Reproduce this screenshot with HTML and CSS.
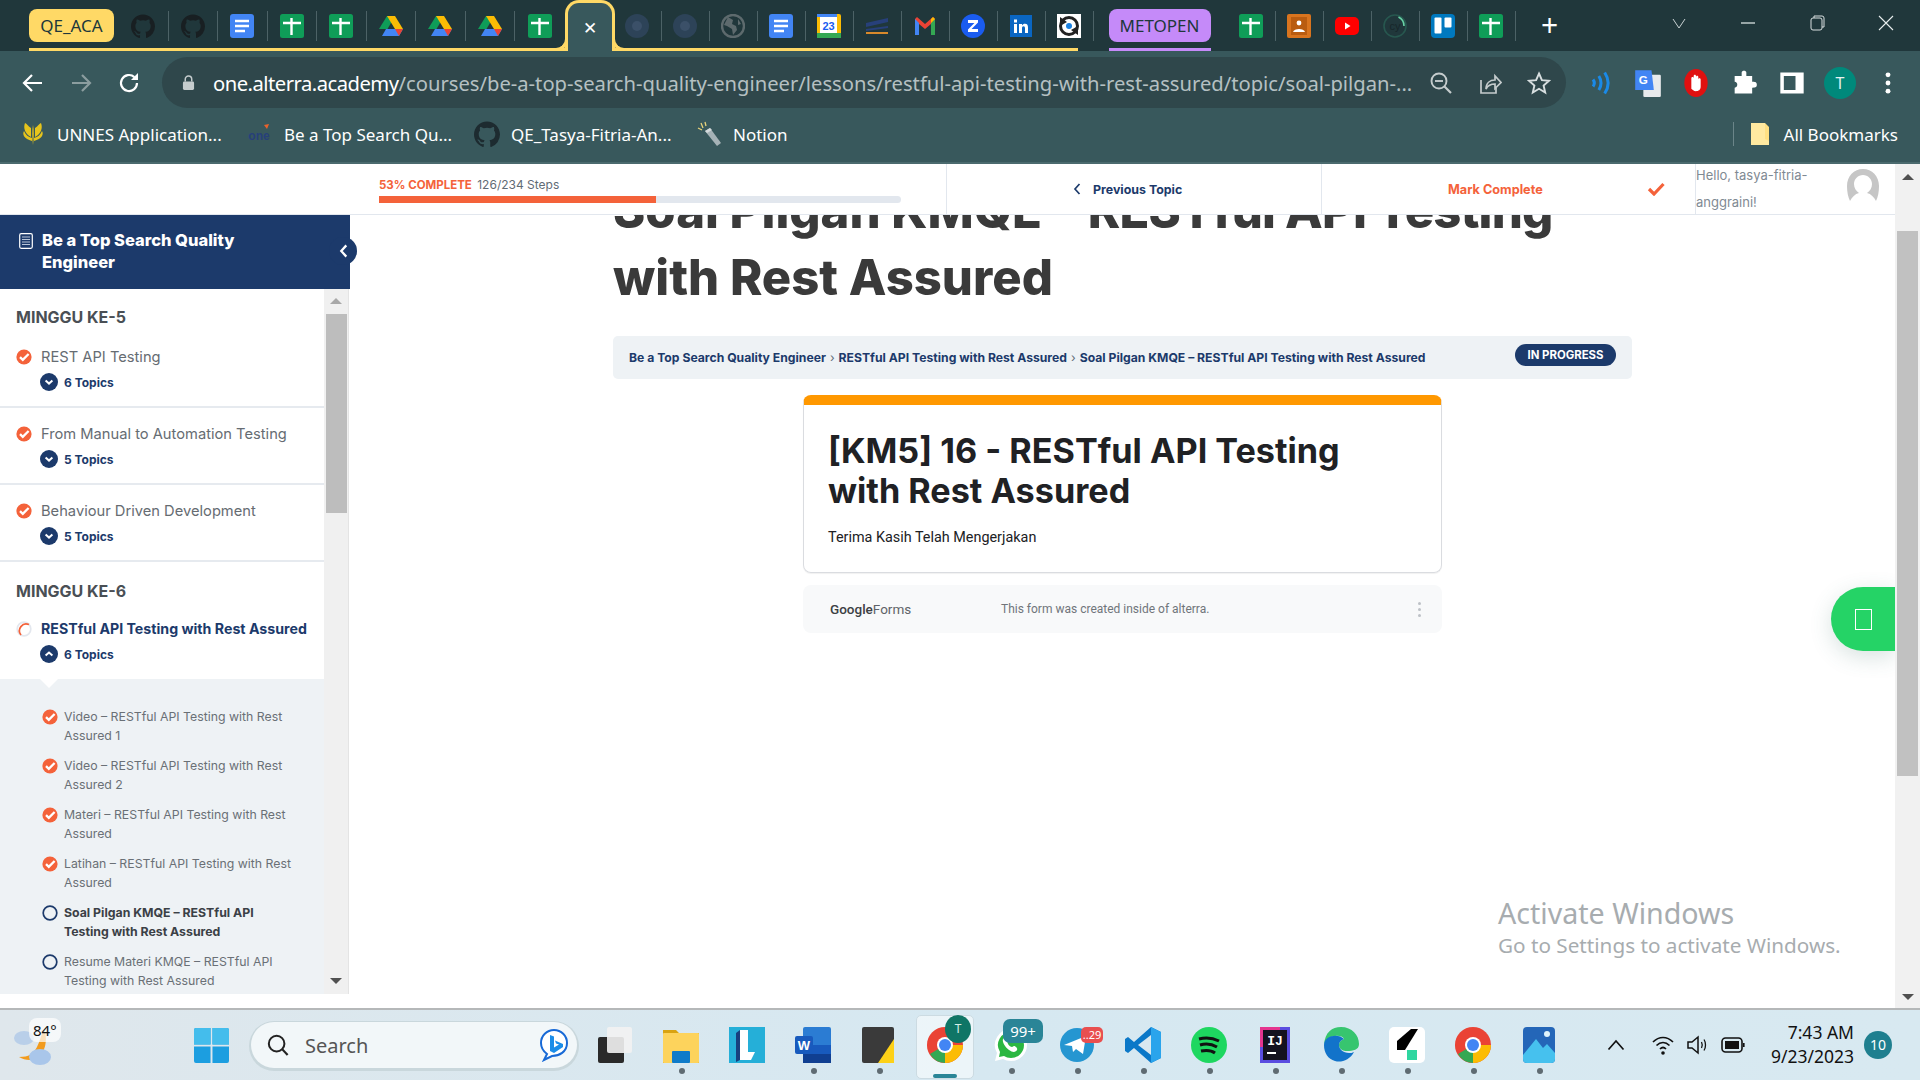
FILE: index.html
```html
<!DOCTYPE html>
<html lang="en">
<head>
  <meta charset="UTF-8">
  <title>Soal Pilgan KMQE</title>
  <link rel="stylesheet" href="styles.css">
</head>
<body>
  <svg class="sprites" width="0" height="0">
    <symbol id="i-sheets" viewBox="0 0 24 24"><rect width="24" height="24" rx="2.5" fill="#0f9d58"/><path d="M3 9h18M11.5 4v17" stroke="#fff" stroke-width="2.4"/></symbol>
    <symbol id="i-docs" viewBox="0 0 24 24"><rect width="24" height="24" rx="3" fill="#4285f4"/><path d="M5 7h14M5 12h14M5 17h10" stroke="#fff" stroke-width="2.4"/></symbol>
    <symbol id="i-drive" viewBox="0 0 24 24"><path d="M8 2h8L8.500 15H0z" fill="#0f9d58"/><path d="M16 2l8 13h-8L8 2z" fill="#fbbc04"/><path d="M3 22L7 15h17l-4 7z" fill="#4285f4"/><path d="M16 15h8l-4 7z" fill="#ea4335"/></symbol>
    <symbol id="i-github" viewBox="0 0 24 24"><path fill="currentColor" d="M12 .5C5.37.5 0 5.87 0 12.5c0 5.3 3.44 9.8 8.2 11.39.6.11.82-.26.82-.58v-2.03c-3.34.73-4.04-1.61-4.04-1.61-.55-1.39-1.33-1.76-1.33-1.76-1.09-.74.08-.73.08-.73 1.2.09 1.84 1.24 1.84 1.24 1.07 1.83 2.81 1.3 3.5 1 .11-.78.42-1.31.76-1.61-2.67-.3-5.47-1.33-5.47-5.93 0-1.31.47-2.38 1.24-3.22-.12-.3-.54-1.52.12-3.18 0 0 1.01-.32 3.3 1.23a11.5 11.5 0 0 1 6 0c2.29-1.55 3.3-1.23 3.3-1.23.66 1.66.24 2.88.12 3.18.77.84 1.24 1.91 1.24 3.22 0 4.61-2.81 5.63-5.48 5.92.43.37.81 1.1.81 2.22v3.29c0 .32.22.7.83.58A12 12 0 0 0 24 12.5C24 5.87 18.63.5 12 .5z"/></symbol>
    <symbol id="i-check" viewBox="0 0 16 16"><circle cx="8" cy="8" r="7.6" fill="#f4623a"/><path d="M4 8.200l2.800 2.700L12.600 5" fill="none" stroke="#fff" stroke-width="2.300"/></symbol>
    <symbol id="i-todo" viewBox="0 0 16 16"><circle cx="8" cy="8" r="6.8" fill="none" stroke="#1c3a6b" stroke-width="1.7"/></symbol>
    <symbol id="i-down" viewBox="0 0 18 18"><circle cx="9" cy="9" r="9" fill="#1c3a6b"/><path d="M5.600 7.600L9 10.600l3.400-3" fill="none" stroke="#fff" stroke-width="2"/></symbol>
    <symbol id="i-up" viewBox="0 0 18 18"><circle cx="9" cy="9" r="9" fill="#1c3a6b"/><path d="M5.600 10.600L9 7.600l3.400 3" fill="none" stroke="#fff" stroke-width="2"/></symbol>
    <symbol id="i-chrome" viewBox="0 0 36 36"><circle cx="18" cy="18" r="18" fill="#ea4335"/><path d="M18 18L3 27A18 18 0 0 1 3 9z" fill="#ea4335"/><path d="M18 18l-15 9a18 18 0 0 0 15 9l9-18z" fill="#34a853"/><path d="M18 18h18a18 18 0 0 1-18 18z" fill="#fbbc04"/><circle cx="18" cy="18" r="8" fill="#fff"/><circle cx="18" cy="18" r="6" fill="#4285f4"/></symbol>
  </svg>

  <div class="tabstrip">
    <div class="tab-group group-yellow">
      <div class="tab-pill pill-yellow">QE_ACA</div>
      <div class="tabs-wide">
        <div class="tab dim-gh"><svg class="tab-icon"><use href="#i-github"/></svg></div>
        <div class="tab dim-gh"><svg class="tab-icon"><use href="#i-github"/></svg></div>
        <div class="tab"><svg class="tab-icon"><use href="#i-docs"/></svg></div>
        <div class="tab"><svg class="tab-icon"><use href="#i-sheets"/></svg></div>
        <div class="tab"><svg class="tab-icon"><use href="#i-sheets"/></svg></div>
        <div class="tab"><svg class="tab-icon"><use href="#i-drive"/></svg></div>
        <div class="tab"><svg class="tab-icon"><use href="#i-drive"/></svg></div>
        <div class="tab"><svg class="tab-icon"><use href="#i-drive"/></svg></div>
        <div class="tab no-sep"><svg class="tab-icon"><use href="#i-sheets"/></svg></div>
      </div>
      <div class="tab-active">✕</div>
      <div class="tabs-tight tabs-after-active">
        <div class="tab"><svg class="tab-icon" viewBox="0 0 24 24"><circle cx="12" cy="12" r="12" fill="#2d4358"/><circle cx="12" cy="12" r="5" fill="#3b5068"/></svg></div>
        <div class="tab"><svg class="tab-icon" viewBox="0 0 24 24"><circle cx="12" cy="12" r="12" fill="#2d4358"/><circle cx="12" cy="12" r="5" fill="#3b5068"/></svg></div>
        <div class="tab"><svg class="tab-icon" viewBox="0 0 24 24"><circle cx="12" cy="12" r="11" fill="none" stroke="#5d6a6d" stroke-width="2.4"/><path d="M7 3l5 3-1 4 4 2 1 4-4 5-1-6-5-3-3-1zM17 5l3 5-3 1z" fill="#5d6a6d"/></svg></div>
        <div class="tab"><svg class="tab-icon"><use href="#i-docs"/></svg></div>
        <div class="tab"><svg class="tab-icon" viewBox="0 0 24 24"><rect width="24" height="24" rx="2" fill="#fbbc04"/><rect x="0" y="19" width="24" height="5" fill="#34a853"/><rect x="3" y="3" width="17" height="16" fill="#fff"/><rect y="0" width="20" height="3" fill="#4285f4"/><text x="11.5" y="16" class="cal-day">23</text></svg></div>
        <div class="tab"><svg class="tab-icon" viewBox="0 0 24 24"><path d="M1 9l22-5v4L1 13zM1 15l22-3v2L1 17z" fill="#27407a"/><rect x="1" y="18" width="22" height="2" fill="#d98a2b"/></svg></div>
        <div class="tab"><svg class="tab-icon" viewBox="0 0 24 24"><path d="M2 5v16h4V10l6 5 6-5v11h4V5l-2-2-8 7-8-7z" fill="#ea4335"/><path d="M2 5v16h4V9z" fill="#4285f4"/><path d="M18 9v12h4V5z" fill="#34a853"/><path d="M18 9l4-4-2-2-2 2z" fill="#fbbc04"/></svg></div>
        <div class="tab"><svg class="tab-icon" viewBox="0 0 24 24"><circle cx="12" cy="12" r="12" fill="#1a5cf0"/><path d="M7 6h10v2.400L10.600 15H17v3H7v-2.400L13.400 9H7z" fill="#fff"/></svg></div>
        <div class="tab"><svg class="tab-icon" viewBox="0 0 24 24"><rect x="1" y="1" width="22" height="22" fill="#0a66c2"/><path d="M5 10h3v9H5zM5 5.500h3v3H5zM10 10h3v1.400c.7-1 1.700-1.600 3-1.600 2.400 0 3 1.600 3 4V19h-3v-4.600c0-1.400-.4-2.200-1.500-2.200S13 13 13 14.400V19h-3z" fill="#fff"/></svg></div>
        <div class="tab"><svg class="tab-icon" viewBox="0 0 24 24"><rect width="24" height="24" fill="#fff"/><circle cx="12" cy="12" r="8.500" fill="none" stroke="#222" stroke-width="3"/><path d="M3 3l7 5-7 4zM21 21l-7-5 7-4z" fill="#222"/><circle cx="12" cy="12" r="3" fill="#1a80e0"/></svg></div>
      </div>
    </div>
    <div class="tab-group group-purple">
      <div class="tab-pill pill-purple">METOPEN</div>
    </div>
    <div class="tabs-tight tabs-last">
      <div class="tab"><svg class="tab-icon"><use href="#i-sheets"/></svg></div>
      <div class="tab"><svg class="tab-icon" viewBox="0 0 24 24"><rect width="24" height="24" rx="2" fill="#d8741e"/><rect x="4" y="3" width="16" height="18" fill="#b95c10"/><circle cx="12" cy="9" r="2.400" fill="#fff"/><path d="M6 18c1-4 11-4 12 0z" fill="#fff"/></svg></div>
      <div class="tab"><svg class="tab-icon" viewBox="0 0 24 24"><rect y="3" width="24" height="18" rx="5" fill="#f00"/><path d="M10 8.500l5.500 3.500-5.500 3.500z" fill="#fff"/></svg></div>
      <div class="tab"><svg class="tab-icon" viewBox="0 0 24 24"><circle cx="12" cy="12" r="11" fill="none" stroke="#27574f" stroke-width="1.600"/><path d="M15.500 3A10 10 0 0 1 21 12" fill="none" stroke="#69d3a7" stroke-width="1.600"/><text x="12" y="16" class="cy-text">cy</text></svg></div>
      <div class="tab"><svg class="tab-icon" viewBox="0 0 24 24"><rect width="24" height="24" rx="4" fill="#0079bf"/><rect x="3.500" y="3.500" width="7" height="16" rx="1" fill="#fff"/><rect x="13.500" y="3.500" width="7" height="10" rx="1" fill="#fff"/></svg></div>
      <div class="tab"><svg class="tab-icon"><use href="#i-sheets"/></svg></div>
    </div>
    <div class="tab-new">+</div>
    <div class="win-controls">
      <svg class="win-btn" viewBox="0 0 20 20"><path d="M4 6l6 9 6-9" fill="none" stroke="#c9d2d3" stroke-width="1"/></svg>
      <svg class="win-btn" viewBox="0 0 20 20"><path d="M3 10h14" stroke="#e8eeee" stroke-width="1.200"/></svg>
      <svg class="win-btn" viewBox="0 0 20 20"><rect x="4" y="5" width="11" height="12" rx="2" fill="none" stroke="#d8dfe0"/><path d="M7 5V3h8a2 2 0 0 1 2 2v9h-2" fill="none" stroke="#d8dfe0"/></svg>
      <svg class="win-btn" viewBox="0 0 20 20"><path d="M3 3l14 14M17 3L3 17" stroke="#e8eeee" stroke-width="1.100"/></svg>
    </div>
  </div>

  <div class="toolbar">
    <div class="nav-btns">
      <svg class="tool-icon" viewBox="0 0 24 24"><path d="M21 12H4M11 4l-8 8 8 8" fill="none" stroke="#fff" stroke-width="2.200"/></svg>
      <svg class="tool-icon" viewBox="0 0 24 24"><path d="M3 12h17M13 4l8 8-8 8" fill="none" stroke="#8b9d9f" stroke-width="2.200"/></svg>
      <svg class="tool-icon" viewBox="0 0 24 24"><path d="M20 12a8 8 0 1 1-2.600-5.900" fill="none" stroke="#fff" stroke-width="2.200"/><path d="M21 2v7h-7z" fill="#fff"/></svg>
    </div>
    <div class="omnibox">
      <svg class="lock" viewBox="0 0 14 18"><path d="M3.500 8V5.500a3.500 3.500 0 0 1 7 0V8" fill="none" stroke="#c5cccd" stroke-width="1.600"/><rect x="1" y="8" width="12" height="9" rx="1.500" fill="#c5cccd"/></svg>
      <div class="url"><span class="url-host">one.alterra.academy</span>/courses/be-a-top-search-quality-engineer/lessons/restful-api-testing-with-rest-assured/topic/soal-pilgan-...</div>
      <div class="omni-actions">
        <svg class="tool-icon" viewBox="0 0 24 24"><circle cx="10" cy="10" r="7.500" fill="none" stroke="#c5cccd" stroke-width="1.900"/><path d="M15.500 15.500L22 22" stroke="#c5cccd" stroke-width="2.200"/><path d="M6 10h8" stroke="#c5cccd" stroke-width="1.900"/></svg>
        <svg class="tool-icon" viewBox="0 0 24 24"><path d="M3 9v13h15v-5" fill="none" stroke="#c5cccd" stroke-width="1.700"/><path d="M8 18c0-6 4-9 9-9V5l6 6.500-6 6V13c-4 0-7 1-9 5z" fill="none" stroke="#c5cccd" stroke-width="1.700"/></svg>
        <svg class="tool-icon" viewBox="0 0 24 24"><path d="M12 2.500l2.900 6.600 7.100.7-5.400 4.700 1.600 7-6.200-3.700-6.200 3.700 1.600-7L2 9.800l7.100-.7z" fill="none" stroke="#d8dfe0" stroke-width="1.900"/></svg>
      </div>
    </div>
    <div class="ext-btns">
      <svg class="ext-icon" viewBox="0 0 24 24"><path d="M6 9c1.500 2 1.500 4 0 6M11 6c2.500 4 2.500 8 0 12M16 3c4 6 4 12 0 18" fill="none" stroke="#1a8ae8" stroke-width="2.600"/></svg>
      <svg class="ext-icon" viewBox="0 0 24 24"><rect x="8" y="5" width="15" height="19" rx="1" fill="#e8eaec"/><path d="M1 1h14l2 17H1z" fill="#4285f4"/><text x="8" y="13" class="g-text">G</text></svg>
      <svg class="ext-icon" viewBox="0 0 24 24"><ellipse cx="12" cy="12" rx="10" ry="12" fill="#e01010"/><path d="M8 17V8c0-1.500 2-1.500 2 0V6c0-1.500 2-1.500 2 0v1c0-1.500 2-1.500 2 0v2c0-1.500 2-1.500 2 0v6c0 3-2 4-4 4s-3-1-4-2z" fill="#fff"/></svg>
      <svg class="ext-icon" viewBox="0 0 24 24"><path d="M10 3c0-2 4-2 4 0v3h5v5c2 0 4 0 4 2.500S21 16 19 16v5H4v-5c3 0 3-5 0-5V6h6z" fill="#fff"/></svg>
      <svg class="ext-icon" viewBox="0 0 24 24"><rect x="2" y="3" width="20" height="18" fill="#fff"/><rect x="5" y="6" width="10" height="12" fill="#38585c"/></svg>
      <div class="profile">T</div>
      <svg class="ext-icon" viewBox="0 0 24 24"><circle cx="12" cy="5" r="2.100" fill="#fff"/><circle cx="12" cy="12" r="2.100" fill="#fff"/><circle cx="12" cy="19" r="2.100" fill="#fff"/></svg>
    </div>
  </div>

  <div class="bookmarks">
    <div class="bm bm-unnes">
      <svg class="bm-icon" viewBox="0 0 26 26"><path d="M13 4c-1 5-1 12 0 20 1-8 1-15 0-20zM11 7C8 5 6 2 5 2c-2 5 0 11 6 14zM15 7c3-2 5-5 6-5 2 5 0 11-6 14zM4 10c-2 3 0 8 8 10v-3c-4-1-6-3-8-7zM22 10c2 3 0 8-8 10v-3c4-1 6-3 8-7z" fill="#e6c41c"/></svg>
      UNNES Application...
    </div>
    <div class="bm bm-one">
      <svg class="bm-icon" viewBox="0 0 26 26"><path d="M17 4l5-1-2 5z" fill="#e8622c"/><text x="12" y="19" class="one-text">one</text></svg>
      Be a Top Search Qu...
    </div>
    <div class="bm bm-gh">
      <svg class="bm-icon gh-dark"><use href="#i-github"/></svg>
      QE_Tasya-Fitria-An...
    </div>
    <div class="bm bm-notion">
      <svg class="bm-icon" viewBox="0 0 26 26"><path d="M8 10l5-3 11 15-4 3z" fill="#a5b2b6"/><path d="M8 10l5-3 2 2-5 3z" fill="#d4dadc"/><path d="M4 2l2 5M8 1l1 4M1 7l4 2" stroke="#e6d27a" stroke-width="1.300"/></svg>
      Notion
    </div>
    <div class="bm-all">
      <svg class="bm-folder" viewBox="0 0 18 22"><path d="M0 0h14l4 4v18H0z" fill="#ffe082"/><path d="M0 0h14v16l4 2v4H0z" fill="#ffe9a0"/></svg>
      All Bookmarks
    </div>
  </div>

  <div class="page">
    <div class="page-body">
      <div class="topbar">
        <div class="progress-cell">
          <div class="progress-label"><span class="progress-pct">53% COMPLETE</span> 126/234 Steps</div>
          <div class="progress-track"><div class="progress-fill" style="width: 53%"></div></div>
        </div>
        <div class="prev-cell">
          <svg class="prev-chev" viewBox="0 0 8 12"><path d="M6.500 1L2 6l4.500 5" fill="none" stroke="#1c3a6b" stroke-width="1.700"/></svg>
          Previous Topic
        </div>
        <div class="complete-cell">
          <span class="complete-text">Mark Complete</span>
          <svg class="complete-check" viewBox="0 0 18 14"><path d="M2 7l5 5L16.500 2" fill="none" stroke="#f4623a" stroke-width="3.200"/></svg>
        </div>
        <div class="user-cell">
          <div class="hello">Hello, tasya-fitria-<br>anggraini!</div>
          <svg class="avatar" viewBox="0 0 32 34"><path d="M16 0c9 0 16 7 16 17 0 6-1 11-3 15-2-4-5-7-9-8 3-2 5-5 5-9 0-5-4-9-9-9s-9 4-9 9c0 4 2 7 5 9-4 1-7 4-9 8C1 28 0 23 0 17 0 7 7 0 16 0z" fill="#c6c6c6"/></svg>
        </div>
      </div>

      <div class="content-row">
        <aside class="sidebar">
          <div class="side-head">
            <svg class="side-book" viewBox="0 0 14 16"><rect x=".7" y=".7" width="12.600" height="14.600" rx="1.500" fill="#1c3a6b" stroke="#fff" stroke-width="1.200"/><path d="M3 4h8M3 6.500h8M3 9h8M3 11.500h8" stroke="#b7c4d8" stroke-width="1.200"/></svg>
            <div class="side-title">Be a Top Search Quality Engineer</div>
            <div class="side-toggle"><svg class="side-chev" viewBox="0 0 8 12"><path d="M6.500 1L2 6l4.500 5" fill="none" stroke="#fff" stroke-width="2"/></svg></div>
          </div>
          <div class="side-scroll">
            <div class="side-list">
              <h3 class="week week-first">MINGGU KE-5</h3>
              <div class="lesson">
                <div class="lesson-title"><svg class="status"><use href="#i-check"/></svg>REST API Testing</div>
                <div class="topics"><svg class="topic-toggle"><use href="#i-down"/></svg>6 Topics</div>
              </div>
              <div class="lesson">
                <div class="lesson-title"><svg class="status"><use href="#i-check"/></svg>From Manual to Automation Testing</div>
                <div class="topics"><svg class="topic-toggle"><use href="#i-down"/></svg>5 Topics</div>
              </div>
              <div class="lesson">
                <div class="lesson-title"><svg class="status"><use href="#i-check"/></svg>Behaviour Driven Development</div>
                <div class="topics"><svg class="topic-toggle"><use href="#i-down"/></svg>5 Topics</div>
              </div>
              <h3 class="week">MINGGU KE-6</h3>
              <div class="lesson lesson-open">
                <div class="lesson-title lesson-current">
                  <svg class="status" viewBox="0 0 16 16"><circle cx="8" cy="8" r="6.800" fill="none" stroke="#e3e7ee" stroke-width="1.700"/><path d="M13 3.500A6.800 6.800 0 0 0 5 14" fill="none" stroke="#f4623a" stroke-width="1.700"/></svg>
                  RESTful API Testing with Rest Assured
                </div>
                <div class="topics"><svg class="topic-toggle"><use href="#i-up"/></svg>6 Topics</div>
              </div>
              <div class="subitems">
                <div class="sub"><svg class="status"><use href="#i-check"/></svg><span>Video – RESTful API Testing with Rest<br>Assured 1</span></div>
                <div class="sub"><svg class="status"><use href="#i-check"/></svg><span>Video – RESTful API Testing with Rest<br>Assured 2</span></div>
                <div class="sub"><svg class="status"><use href="#i-check"/></svg><span>Materi – RESTful API Testing with Rest<br>Assured</span></div>
                <div class="sub"><svg class="status"><use href="#i-check"/></svg><span>Latihan – RESTful API Testing with Rest<br>Assured</span></div>
                <div class="sub sub-current"><svg class="status"><use href="#i-todo"/></svg><span>Soal Pilgan KMQE – RESTful API<br>Testing with Rest Assured</span></div>
                <div class="sub"><svg class="status"><use href="#i-todo"/></svg><span>Resume Materi KMQE – RESTful API<br>Testing with Rest Assured</span></div>
              </div>
            </div>
            <div class="side-bar">
              <div class="arrow-up"></div>
              <div class="side-thumb"></div>
              <div class="arrow-down"></div>
            </div>
          </div>
        </aside>

        <main class="main">
          <div class="column">
            <h1 class="title">Soal Pilgan KMQE – <span class="title-tail">RESTful API Testing</span><br>with Rest Assured</h1>
            <div class="crumbs">
              <div class="crumb-path">
                <span>Be a Top Search Quality Engineer</span><span class="crumb-sep">›</span><span>RESTful API Testing with Rest Assured</span><span class="crumb-sep">›</span><span>Soal Pilgan KMQE – RESTful API Testing with Rest Assured</span>
              </div>
              <div class="badge">IN PROGRESS</div>
            </div>
            <div class="form-wrap">
              <div class="form-card">
                <h2 class="form-title">[KM5] 16 - RESTful API Testing<br>with Rest Assured</h2>
                <p class="form-note">Terima Kasih Telah Mengerjakan</p>
              </div>
              <div class="form-foot">
                <div class="form-brand"><span class="brand-g">Google</span>Forms</div>
                <div class="form-created">This form was created inside of alterra.</div>
                <div class="form-dots"><i></i><i></i><i></i></div>
              </div>
            </div>
          </div>
          <div class="fab"><div class="fab-box"></div></div>
          <div class="activate">
            <div class="activate-big">Activate Windows</div>
            <div class="activate-small">Go to Settings to activate Windows.</div>
          </div>
        </main>
      </div>
    </div>
    <div class="page-bar">
      <div class="arrow-up"></div>
      <div class="page-thumb"></div>
      <div class="arrow-down"></div>
    </div>
  </div>

  <div class="taskbar">
    <div class="weather">
      <svg class="weather-icon" viewBox="0 0 38 40"><path d="M30 2c4 10 2 25-9 30-5 2-11 1-16-2 10 0 14-3 18-10 3-6 4-12 7-18z" fill="#f29b1d"/><ellipse cx="10" cy="11" rx="10" ry="7" fill="#b9cfe9"/><ellipse cx="26" cy="30" rx="11" ry="8" fill="#a9c6ea"/></svg>
      <span class="temp">84°</span>
    </div>
    <svg class="start" viewBox="0 0 36 36"><path d="M0 2a2 2 0 0 1 2-2h15v17H0zM19 0h15a2 2 0 0 1 2 2v15H19zM0 19h17v17H2a2 2 0 0 1-2-2zM19 19h17v15a2 2 0 0 1-2 2H19z" fill="#1c9ee0"/><path d="M0 2a2 2 0 0 1 2-2h15v17H0zM19 0h15a2 2 0 0 1 2 2v15H19z" fill="#44bdec"/></svg>
    <div class="search">
      <svg class="search-icon" viewBox="0 0 24 24"><circle cx="10.500" cy="10.500" r="8.500" fill="none" stroke="#222" stroke-width="2.200"/><path d="M16.500 16.500L22.500 23" stroke="#222" stroke-width="2.400"/></svg>
      <span class="search-text">Search</span>
      <svg class="bing" viewBox="0 0 30 34"><path d="M15 2a13 13 0 0 1 13 13c0 9-8 13-15 13l-8 4 3-6C4 23 2 19 2 15A13 13 0 0 1 15 2z" fill="#fff" stroke="#1769d6" stroke-width="2"/><path d="M11 7l4 1.500v11l5-3-3-1-1-3 8 3.500v3L15 25l-4-2z" fill="#1b8de8"/></svg>
    </div>
    <div class="apps">
      <div class="app"><svg class="app-icon" viewBox="0 0 34 36"><rect x="0" y="10" width="26" height="26" rx="2" fill="#2a2a2a"/><rect x="9" y="0" width="25" height="26" rx="2" fill="#f2f2f2" opacity=".9"/></svg></div>
      <div class="app"><svg class="app-icon" viewBox="0 0 36 36"><path d="M0 3h13l3 3h20v30H0z" fill="#d9a311"/><rect y="6" width="36" height="30" rx="1" fill="#fdd35c"/><rect x="9" y="24" width="18" height="12" rx="1" fill="#0f7bc9"/></svg><i class="dot"></i></div>
      <div class="app"><svg class="app-icon" viewBox="0 0 36 36"><rect width="36" height="36" fill="#25afd8"/><path d="M11 3h8v22h7l-4 8H11z" fill="#fff"/><path d="M11 33l-4 2V6l4-3z" fill="#18407e"/></svg></div>
      <div class="app"><svg class="app-icon" viewBox="0 0 36 36"><rect x="8" y="0" width="28" height="36" rx="2" fill="#2b7cd3"/><rect x="8" y="18" width="28" height="9" fill="#185abd"/><rect x="8" y="27" width="28" height="9" fill="#103f91"/><rect y="9" width="18" height="18" rx="2" fill="#185abd"/><text x="9" y="23" class="w-text">W</text></svg><i class="dot"></i></div>
      <div class="app"><svg class="app-icon" viewBox="0 0 34 36"><rect width="32" height="36" rx="2" fill="#3a3a3a"/><path d="M32 12L16 36h16z" fill="#fdd118"/></svg><i class="dot"></i></div>
      <div class="app app-active">
        <svg class="app-icon"><use href="#i-chrome"/></svg>
        <span class="app-t">T</span>
        <i class="dash"></i>
      </div>
      <div class="app">
        <svg class="app-icon" viewBox="0 0 36 36"><path d="M18 2a16 16 0 0 1 0 32c-3 0-6-1-8-2l-8 2 2-8a16 16 0 0 1 14-24z" fill="#fff"/><path d="M18 5a13 13 0 0 1 0 26c-3 0-5-1-7-2l-5 1 1-5A13 13 0 0 1 18 5z" fill="#2bb741"/><path d="M12 10c2-1 3 3 3 4s-1 1 0 3 3 3 4 3 1-1 2-1 4 2 3 4-4 3-8 0-7-8-6-11z" fill="#fff"/></svg>
        <span class="app-badge badge-wa">99+</span><i class="dot"></i>
      </div>
      <div class="app">
        <svg class="app-icon" viewBox="0 0 36 36"><circle cx="18" cy="18" r="17" fill="#2596d1"/><path d="M5 18l22-9-3 18-7-5-3 3-1-6z" fill="#fff"/></svg>
        <span class="app-badge badge-tg">..29</span><i class="dot"></i>
      </div>
      <div class="app"><svg class="app-icon" viewBox="0 0 36 36"><path d="M26 0l10 5v26l-10 5L9 21 3 26 0 24V12l3-2 6 5z" fill="#0b78c8"/><path d="M26 8L13 18l13 10z" fill="#d9e8f0"/><path d="M26 0l10 5v26l-10 5z" fill="#2aa4ec"/></svg><i class="dot"></i></div>
      <div class="app"><svg class="app-icon" viewBox="0 0 36 36"><circle cx="18" cy="18" r="18" fill="#1ed760"/><path d="M8 12c7-2 14-1 20 2M9 18c6-2 12-1 17 2M10 24c5-1 10-1 14 2" fill="none" stroke="#111" stroke-width="3"/></svg><i class="dot"></i></div>
      <div class="app"><svg class="app-icon" viewBox="0 0 30 36"><rect width="30" height="36" fill="#5a4de0"/><rect y="0" width="20" height="20" fill="#e5358f"/><rect x="3" y="3" width="24" height="30" fill="#14121f"/><text x="15" y="18" class="ij-text">IJ</text><rect x="7" y="25" width="9" height="2" fill="#fff"/></svg><i class="dot"></i></div>
      <div class="app"><svg class="app-icon" viewBox="0 0 36 36"><path d="M18 0c11 0 18 8 18 17 0 6-6 7-12 7-4 0-8-2-8-6 0-3 2-5 5-6-2-5-17-5-20 6C2 5 9 0 18 0z" fill="#37c56f"/><path d="M1 18C1 8 16 6 21 12c-3 1-5 3-5 6 0 4 4 8 10 8 2 0 3 0 5-1-4 8-13 11-19 9C5 32 1 26 1 18z" fill="#1273ca"/></svg><i class="dot"></i></div>
      <div class="app"><svg class="app-icon" viewBox="0 0 36 36"><rect width="36" height="36" rx="5" fill="#fff"/><path d="M22 2h7L16 23H8V14z" fill="#000"/><rect x="18" y="23" width="10" height="10" fill="#2fd6a0"/></svg><i class="dot"></i></div>
      <div class="app"><svg class="app-icon"><use href="#i-chrome"/></svg><i class="dot"></i></div>
      <div class="app"><svg class="app-icon" viewBox="0 0 32 36"><rect width="32" height="36" rx="4" fill="#2466b8"/><path d="M0 28l13-16 7 9 4-4 8 9v6a4 4 0 0 1-4 4H4a4 4 0 0 1-4-4z" fill="#46c1ee"/><circle cx="24" cy="7" r="3" fill="#dff3fb"/></svg><i class="dot"></i></div>
    </div>
    <div class="tray">
      <svg class="tray-up" viewBox="0 0 18 12"><path d="M1.500 10.500L9 2l7.500 8.500" fill="none" stroke="#111" stroke-width="1.700"/></svg>
      <svg class="tray-icon" viewBox="0 0 24 24"><path d="M2 9c6-6 14-6 20 0M5.500 12.500c4-4 9-4 13 0M9 16c2-2 4-2 6 0" fill="none" stroke="#111" stroke-width="1.700"/><circle cx="12" cy="20" r="1.800" fill="#111"/></svg>
      <svg class="tray-icon" viewBox="0 0 24 24"><path d="M2 9h4l6-5v16l-6-5H2z" fill="none" stroke="#111" stroke-width="1.500"/><path d="M15.500 9c1 2 1 4 0 6M18 6.500c2 3 2 8 0 11" fill="none" stroke="#111" stroke-width="1.300"/></svg>
      <svg class="tray-icon" viewBox="0 0 24 24"><rect x="1" y="5" width="20" height="14" rx="3.500" fill="none" stroke="#111" stroke-width="1.600"/><rect x="4" y="8" width="14" height="8" fill="#111"/><rect x="22" y="10" width="1.600" height="4" fill="#111"/></svg>
      <div class="clock"><div>7:43 AM</div><div>9/23/2023</div></div>
      <div class="notif">10</div>
    </div>
  </div>
</body>
</html>
```

FILE: styles.css
```css
* {
  box-sizing: border-box;
}

html, body {
  height: 100%;
}

body {
  margin: 0;
  display: flex;
  flex-direction: column;
  height: 1080px;
  overflow: hidden;
  font-family: 'Inter', sans-serif;
  background: #fff;
}

.sprites {
  position: absolute;
}

/* ---- tab strip ---- */
.tabstrip {
  display: flex;
  height: 51px;
  flex: none;
  padding-left: 29px;
  background: #20373b;
  font-family: 'Noto Sans', sans-serif;
}

.tab-group {
  display: flex;
  height: 51px;
}

.group-yellow {
  border-bottom: 3px solid #ffd966;
}

.group-purple {
  margin-left: 31px;
  border-bottom: 3px solid #c58af9;
}

.tab-pill {
  height: 33px;
  margin-top: 9px;
  border-radius: 8px;
  display: flex;
  align-items: center;
  justify-content: center;
  font-size: 17px;
  color: #20373b;
}

.pill-yellow {
  width: 85px;
  margin-right: 5px;
  background: #ffd966;
}

.pill-purple {
  width: 102px;
  background: #c58af9;
}

.tabs-wide, .tabs-tight {
  display: flex;
}

.tab {
  height: 30px;
  margin-top: 11px;
  display: flex;
  align-items: center;
  justify-content: center;
  border-right: 1px solid #4c6266;
  width: 49.5px;
  flex: none;
}

.tabs-tight .tab {
  width: 48px;
}

.no-sep {
  border-right: none;
}

.dim-gh {
  color: #181f22;
}

.tabs-after-active {
  margin-left: -1px;
  margin-right: -16px;
}

.tabs-last {
  margin-left: 17px;
}

.tab-icon {
  width: 24px;
  height: 24px;
  display: block;
}

.tab-active {
  width: 50px;
  height: 51px;
  flex: none;
  border: 3px solid #ffd966;
  border-bottom: none;
  border-radius: 14px 14px 0 0;
  background: #38585c;
  display: flex;
  align-items: center;
  justify-content: center;
  color: #fff;
  font-size: 17px;
  position: relative;
  z-index: 1;
}

.tab-active::before,
.tab-active::after {
  content: "";
  position: absolute;
  bottom: 0;
  width: 12px;
  height: 12px;
  background: #20373b;
  border-bottom: 3px solid #ffd966;
}

.tab-active::before {
  left: -15px;
  border-right: 3px solid #ffd966;
  border-bottom-right-radius: 12px;
}

.tab-active::after {
  right: -15px;
  border-left: 3px solid #ffd966;
  border-bottom-left-radius: 12px;
}

.cal-day {
  font: bold 11px 'Liberation Sans', sans-serif;
  fill: #1a5cf0;
  text-anchor: middle;
}

.cy-text {
  font: 11px 'Liberation Sans', sans-serif;
  fill: #17262a;
  text-anchor: middle;
}

.tab-new {
  width: 60px;
  margin-left: 4px;
  text-align: center;
  color: #fff;
  font-size: 30px;
  line-height: 50px;
}

.win-controls {
  margin-left: auto;
  display: flex;
}

.win-btn {
  width: 20px;
  height: 20px;
  margin: 13px 24px 0 25px;
  flex: none;
}

/* ---- toolbar ---- */
.toolbar {
  display: flex;
  align-items: center;
  height: 69px;
  flex: none;
  padding-bottom: 12px;
  padding-top: 6px;
  background: #38585c;
  font-family: 'Noto Sans', sans-serif;
}

.nav-btns {
  display: flex;
  gap: 24px;
  padding-left: 21px;
  width: 162px;
  flex: none;
}

.tool-icon {
  width: 24px;
  height: 24px;
  flex: none;
}

.omnibox {
  width: 1404px;
  height: 51px;
  flex: none;
  border-radius: 26px;
  background: #2f474b;
  display: flex;
  align-items: center;
  padding-left: 20px;
  padding-right: 15px;
}

.lock {
  width: 13px;
  height: 17px;
  flex: none;
}

.url {
  margin-left: 18px;
  font-size: 20.2px;
  color: #b5c0c2;
  white-space: nowrap;
  flex: 1;
  overflow: hidden;
}

.url-host {
  color: #fff;
  letter-spacing: -0.5px;
}

.omni-actions {
  display: flex;
  gap: 25px;
  margin-left: 10px;
}

.ext-btns {
  display: flex;
  align-items: center;
  gap: 20px;
  margin-left: 20px;
}

.ext-icon {
  width: 28px;
  height: 28px;
  flex: none;
}

.profile {
  width: 32px;
  height: 32px;
  margin: 0 -2px;
  border-radius: 50%;
  background: #00897b;
  color: #e6f2f0;
  font-size: 16px;
  text-align: center;
  line-height: 32px;
  flex: none;
}

.g-text {
  font: bold 10px 'Liberation Sans', sans-serif;
  fill: #fff;
  text-anchor: middle;
}

/* ---- bookmarks ---- */
.bookmarks {
  display: flex;
  align-items: center;
  height: 44px;
  flex: none;
  padding-left: 20px;
  padding-bottom: 14px;
  background: #38585c;
  border-bottom: 2px solid #4b6a6e;
  font-family: 'Noto Sans', sans-serif;
  font-size: 17px;
  color: #fff;
}

.bm {
  display: flex;
  align-items: center;
  white-space: nowrap;
}

.bm-icon {
  width: 26px;
  height: 26px;
  flex: none;
}

.bm-unnes {
  gap: 11px;
  width: 227px;
}

.bm-one {
  gap: 11px;
  width: 227px;
}

.bm-gh {
  gap: 11px;
  width: 223px;
}

.bm-notion {
  gap: 10px;
}

.gh-dark {
  color: #1d2b30;
}

.one-text {
  font: bold 12px 'Liberation Sans', sans-serif;
  fill: #27407a;
  text-anchor: middle;
}

.bm-all {
  margin-left: auto;
  margin-right: 22px;
  padding-left: 17px;
  display: flex;
  align-items: center;
  gap: 15px;
  height: 24px;
  border-left: 1px solid #6b8589;
}

.bm-folder {
  width: 18px;
  height: 22px;
}

/* ---- page ---- */
.page {
  display: flex;
  flex: 1;
  min-height: 0;
}

.page-body {
  flex: 1;
  min-width: 0;
  display: flex;
  flex-direction: column;
}

.page-bar {
  width: 25px;
  flex: none;
  background: #f1f1f1;
  display: flex;
  flex-direction: column;
  align-items: center;
  padding-top: 10px;
  padding-bottom: 8px;
}

.page-thumb {
  width: 21px;
  height: 545px;
  margin-top: 51px;
  background: #c1c1c1;
}

.page-bar .arrow-down {
  margin-top: auto;
}

.arrow-up {
  width: 0;
  height: 0;
  border-left: 6px solid transparent;
  border-right: 6px solid transparent;
  border-bottom: 6px solid #505050;
}

.arrow-down {
  width: 0;
  height: 0;
  border-left: 6px solid transparent;
  border-right: 6px solid transparent;
  border-top: 6px solid #505050;
}

/* ---- top progress row ---- */
.topbar {
  display: flex;
  height: 51px;
  flex: none;
  background: #fff;
  border-bottom: 1px solid #e2e7ee;
  position: relative;
  z-index: 2;
}

.progress-cell {
  width: 946px;
  flex: none;
  padding: 13px 45px 0 379px;
}

.progress-label {
  font-size: 12px;
  color: #5f6b75;
  line-height: 16px;
  white-space: nowrap;
}

.progress-pct {
  font-size: 11.5px;
  font-weight: 700;
  color: #f4623a;
  margin-right: 2px;
}

.progress-track {
  height: 7px;
  margin-top: 3px;
  background: #e2e7ee;
  border-radius: 0 4px 4px 0;
}

.progress-fill {
  height: 7px;
  background: #f4623a;
}

.prev-cell {
  width: 375px;
  flex: none;
  border-left: 1px solid #e2e7ee;
  display: flex;
  align-items: center;
  padding-left: 126px;
  gap: 12px;
  font-size: 12.4px;
  font-weight: 700;
  color: #1c3a6b;
}

.prev-chev {
  width: 8px;
  height: 12px;
}

.complete-cell {
  width: 374px;
  flex: none;
  border-left: 1px solid #e2e7ee;
  display: flex;
  align-items: center;
  padding-left: 126px;
  font-size: 12.7px;
  font-weight: 700;
  color: #f4623a;
}

.complete-text {
  width: 199px;
}

.complete-check {
  width: 18px;
  height: 14px;
}

.user-cell {
  flex: 1;
  border-left: 1px solid #e2e7ee;
  display: flex;
  padding-top: 5px;
}

.hello {
  width: 151px;
  font-size: 13px;
  line-height: 27px;
  margin-top: -7px;
  color: #7f8a93;
  white-space: nowrap;
}

.avatar {
  width: 32px;
  height: 34px;
}

/* ---- content ---- */
.content-row {
  flex: 1;
  min-height: 0;
  display: flex;
}

.sidebar {
  width: 350px;
  flex: none;
  display: flex;
  flex-direction: column;
  padding-bottom: 14px;
  position: relative;
  z-index: 1;
}

.side-head {
  height: 74px;
  flex: none;
  background: #1c3a6b;
  display: flex;
  align-items: flex-start;
  padding: 14px 40px 0 19px;
  gap: 9px;
  position: relative;
}

.side-book {
  width: 14px;
  height: 16px;
  margin-top: 4px;
  flex: none;
}

.side-title {
  width: 220px;
  color: #fff;
  font-size: 16.5px;
  font-weight: 800;
  line-height: 22px;
}

.side-toggle {
  position: absolute;
  right: -7px;
  top: 22px;
  width: 28px;
  height: 28px;
  border-radius: 50%;
  background: #1c3a6b;
  display: flex;
  align-items: center;
  justify-content: center;
}

.side-chev {
  width: 9px;
  height: 14px;
}

.side-scroll {
  flex: 1;
  min-height: 0;
  display: flex;
  overflow: hidden;
}

.side-list {
  width: 324px;
  flex: none;
  background: #fff;
  overflow: hidden;
}

.side-bar {
  width: 25px;
  flex: none;
  background: #f0f0f0;
  border-right: 1px solid #e4e4e4;
  display: flex;
  flex-direction: column;
  align-items: center;
  padding-top: 9px;
}

.side-thumb {
  width: 21px;
  height: 199px;
  margin-top: 10px;
  background: #bdbdbd;
}

.side-bar .arrow-up {
  border-bottom-color: #a8a8a8;
}

.side-bar .arrow-down {
  margin-top: auto;
  margin-bottom: 10px;
}

.week {
  margin: 0;
  padding: 19px 16px 0;
  height: 56px;
  font-size: 16px;
  font-weight: 700;
  line-height: 20px;
  color: #4a4f55;
}

.week-first {
  height: 57px;
  padding-top: 18px;
}

.lesson {
  height: 77px;
  border-bottom: 2px solid #e6eaef;
}

.week-first + .lesson {
  height: 62px;
}

.week-first + .lesson .lesson-title {
  padding-top: 0;
}

.lesson-title {
  display: flex;
  align-items: center;
  padding-top: 15px;
  padding-left: 16px;
  gap: 9px;
  font-size: 14.7px;
  line-height: 22px;
  color: #666c72;
  white-space: nowrap;
}

.lesson-current {
  font-size: 14.2px;
  font-weight: 700;
  color: #1c3a6b;
  padding-top: 0;
}

.lesson-open {
  height: 61px;
  border-bottom: none;
  background: #fff;
}

.status {
  width: 16px;
  height: 16px;
  flex: none;
}

.topics {
  display: flex;
  align-items: center;
  gap: 6px;
  padding-left: 40px;
  margin-top: 5px;
  height: 18px;
  font-size: 12px;
  font-weight: 700;
  color: #1c3a6b;
}

.topic-toggle {
  width: 18px;
  height: 18px;
}

.subitems {
  position: relative;
  background: #eef2f5;
  padding-top: 28px;
  height: 315px;
  overflow: hidden;
}

.subitems::before {
  content: "";
  position: absolute;
  left: 40px;
  top: 0;
  width: 0;
  height: 0;
  border-left: 9px solid transparent;
  border-right: 9px solid transparent;
  border-top: 9px solid #fff;
}

.sub {
  display: flex;
  gap: 6px;
  padding-left: 42px;
  height: 49px;
  font-size: 12.3px;
  line-height: 19px;
  color: #6a7076;
  white-space: nowrap;
}

.sub .status {
  margin-top: 2px;
}

.sub-current {
  font-weight: 700;
  color: #3b4046;
}

.main {
  flex: 1;
  min-width: 0;
  position: relative;
  overflow: hidden;
  background: #fff;
}

.column {
  width: 1019px;
  margin: 0 auto;
}

.title {
  margin: -38px 0 0;
  font-size: 49px;
  font-weight: 800;
  line-height: 67px;
  color: #3a3a3a;
  white-space: nowrap;
}

.title-tail {
  letter-spacing: -0.8px;
}

.crumbs {
  margin-top: 25px;
  height: 43px;
  background: #eef2f5;
  border-radius: 5px;
  display: flex;
  align-items: flex-start;
  justify-content: space-between;
  padding: 8px 16px 0;
}

.crumb-path {
  font-size: 12.2px;
  font-weight: 700;
  color: #1c3a6b;
  line-height: 27px;
  white-space: nowrap;
}

.crumb-sep {
  margin: 0 4px;
  font-weight: 400;
  color: #5f6b75;
}

.badge {
  height: 22px;
  width: 101px;
  border-radius: 11px;
  background: #1c3a6b;
  color: #fff;
  font-size: 11.4px;
  font-weight: 700;
  text-align: center;
  line-height: 22px;
}

.form-wrap {
  width: 639px;
  margin: 16px auto 0;
}

.form-card {
  height: 178px;
  border: 1px solid #dadce0;
  border-top: 10px solid #ff9800;
  border-radius: 8px;
  padding: 26px 24px 0;
  box-shadow: 0 1px 1px rgba(0, 0, 0, 0.06);
}

.form-title {
  margin: 0;
  font-size: 34.2px;
  font-weight: 700;
  line-height: 40px;
  color: #202124;
  white-space: nowrap;
}

.form-note {
  margin: 18px 0 0;
  font-family: 'Roboto', sans-serif;
  font-size: 14.4px;
  color: #202124;
}

.form-foot {
  margin-top: 12px;
  height: 48px;
  background: #f8f9fa;
  border-radius: 8px;
  display: flex;
  align-items: center;
  padding: 0 21px 0 27px;
  font-family: 'Roboto', sans-serif;
  color: #70757a;
}

.form-brand {
  width: 171px;
  font-size: 13.5px;
  color: #5f6368;
}

.brand-g {
  color: #3c4043;
  font-weight: 500;
}

.form-created {
  font-size: 12px;
  flex: 1;
}

.form-dots {
  display: flex;
  flex-direction: column;
  gap: 3px;
}

.form-dots i {
  width: 3px;
  height: 3px;
  border-radius: 50%;
  background: #bdc1c6;
}

.fab {
  position: absolute;
  right: 0;
  top: 372px;
  width: 64px;
  height: 64px;
  border-radius: 32px 0 0 32px;
  background: #25d366;
  box-shadow: 0 6px 22px rgba(60, 110, 100, 0.2);
  display: flex;
  align-items: center;
  justify-content: center;
}

.fab-box {
  width: 17px;
  height: 21px;
  border: 1px solid #fff;
}

.activate {
  position: absolute;
  left: 1148px;
  top: 680px;
  color: #a7acaf;
  font-family: 'Noto Sans', sans-serif;
  white-space: nowrap;
  pointer-events: none;
}

.activate-big {
  font-size: 28.6px;
  line-height: 36px;
}

.activate-small {
  font-size: 20.7px;
  line-height: 28px;
}

/* ---- taskbar ---- */
.taskbar {
  height: 72px;
  flex: none;
  display: flex;
  align-items: center;
  border-top: 2px solid #b5b8b9;
  background: linear-gradient(90deg, #dfe7ec 0%, #d6e8f1 50%, #d8e9f1 100%);
  font-family: 'Noto Sans', sans-serif;
}

.weather {
  width: 194px;
  flex: none;
  position: relative;
  height: 70px;
}

.weather-icon {
  position: absolute;
  left: 14px;
  top: 17px;
  width: 38px;
  height: 40px;
}

.temp {
  position: absolute;
  left: 29px;
  top: 8px;
  padding: 0 4px;
  border-radius: 8px;
  background: rgba(255, 255, 255, 0.7);
  font-size: 15px;
  line-height: 24px;
  color: #111;
}

.start {
  width: 35px;
  height: 35px;
  flex: none;
}

.search {
  width: 326px;
  height: 46px;
  margin-left: 22px;
  flex: none;
  display: flex;
  align-items: center;
  padding: 0 8px 0 16px;
  border-radius: 23px;
  background: #f2f7f9;
  box-shadow: 0 1px 0 2px #c9d7dc;
}

.search-icon {
  width: 22px;
  height: 24px;
  flex: none;
}

.search-text {
  margin-left: 16px;
  font-size: 20px;
  color: #555;
  flex: 1;
}

.bing {
  width: 30px;
  height: 34px;
}

.apps {
  display: flex;
  margin-left: 5px;
}

.app {
  width: 66px;
  height: 70px;
  flex: none;
  position: relative;
  display: flex;
  align-items: center;
  justify-content: center;
}

.app-icon {
  width: 36px;
  height: 36px;
}

.dot {
  position: absolute;
  left: 31px;
  bottom: 6px;
  width: 6px;
  height: 6px;
  border-radius: 50%;
  background: #5f6b72;
}

.app-active::before {
  content: "";
  position: absolute;
  left: 4px;
  right: 4px;
  top: 5px;
  bottom: 1px;
  background: rgba(255, 255, 255, 0.55);
  border: 1px solid #ccdbe2;
  border-radius: 5px;
}

.app-active .app-icon {
  position: relative;
}

.dash {
  position: absolute;
  left: 21px;
  bottom: 2px;
  width: 24px;
  height: 4px;
  border-radius: 2px;
  background: #2a8597;
}

.app-t {
  position: absolute;
  right: 7px;
  top: 5px;
  width: 26px;
  height: 28px;
  border-radius: 50%;
  background: #0f7566;
  color: #d5efe9;
  font-size: 12px;
  text-align: center;
  line-height: 28px;
}

.app-badge {
  position: absolute;
  text-align: center;
  color: #fff;
}

.badge-wa {
  left: 25px;
  top: 9px;
  width: 40px;
  height: 24px;
  border-radius: 7px;
  background: #2a8597;
  font-size: 15px;
  line-height: 24px;
}

.badge-tg {
  left: 37px;
  top: 17px;
  width: 22px;
  height: 16px;
  border-radius: 5px;
  background: #e94f4f;
  font-size: 11px;
  line-height: 16px;
}

.w-text {
  font: bold 13px 'Liberation Sans', sans-serif;
  fill: #fff;
  text-anchor: middle;
}

.ij-text {
  font: bold 13px 'Liberation Mono', monospace;
  fill: #fff;
  text-anchor: middle;
}

.tray {
  margin-left: auto;
  display: flex;
  align-items: center;
  padding-right: 28px;
}

.tray-up {
  width: 18px;
  height: 12px;
  margin-right: 26px;
}

.tray-icon {
  width: 24px;
  height: 24px;
  margin-right: 11px;
}

.clock {
  margin-left: 15px;
  margin-top: -2px;
  text-align: right;
  font-size: 17.5px;
  line-height: 24px;
  color: #111;
}

.notif {
  width: 28px;
  height: 28px;
  margin-left: 10px;
  border-radius: 50%;
  background: #1f7f8f;
  color: #fff;
  font-size: 14px;
  text-align: center;
  line-height: 28px;
}
```
